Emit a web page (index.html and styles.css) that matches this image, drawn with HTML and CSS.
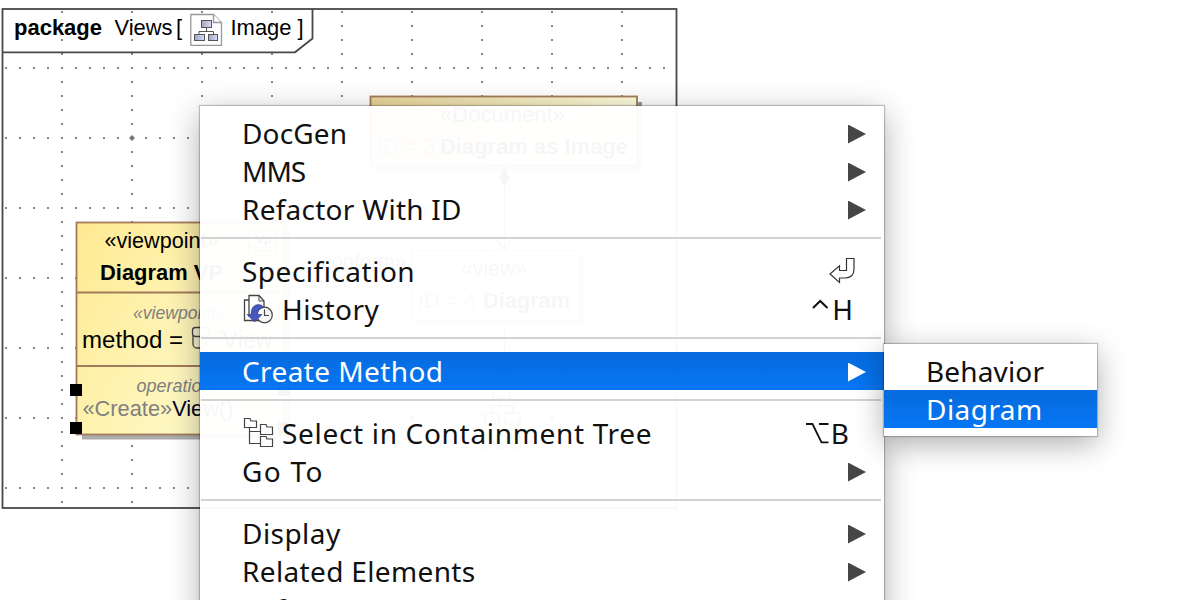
FILE: index.html
```html
<!DOCTYPE html>
<html lang="en">
<head>
<meta charset="utf-8">
<title>Views diagram</title>
<link rel="stylesheet" href="styles.css">
</head>
<body>
<main class="stage">
<svg class="diagram" width="1181" height="600" viewBox="0 0 1181 600">
  <defs>
    <linearGradient id="yellow" x1="0" y1="0" x2="1" y2="0.6"><stop offset="0" stop-color="#ffea91"/><stop offset="1" stop-color="#fdfbd0"/></linearGradient>
    <linearGradient id="tan" x1="0" x2="1"><stop offset="0" stop-color="#e8d59a"/><stop offset="1" stop-color="#fffddc"/></linearGradient>
    <linearGradient id="node" x1="0" x2="1"><stop offset="0" stop-color="#9da4c9"/><stop offset="1" stop-color="#dadef0"/></linearGradient>
    <pattern id="rows" x="5" y="67" width="14" height="70" patternUnits="userSpaceOnUse"><rect width="2" height="2" fill="#858585"/></pattern>
    <pattern id="cols" x="61" y="11" width="70" height="14" patternUnits="userSpaceOnUse"><rect width="2" height="2" fill="#858585"/></pattern>
  </defs>
  <rect class="frame" x="2.5" y="9" width="674" height="499"/>
  <rect x="4" y="60" width="670" height="446" fill="url(#rows)"/>
  <rect x="4" y="10" width="670" height="496" fill="url(#cols)"/>
  <g fill="#777"><path d="M132 135l3 3-3 3-3-3z"/><path d="M412 415l3 3-3 3-3-3z"/><path d="M552 415l3 3-3 3-3-3z"/></g>
  <path class="frame" d="M3 52.3H295L312.5 38.5V9"/>
  <g class="label">
    <text class="bold" x="14" y="34.5" textLength="88" lengthAdjust="spacingAndGlyphs">package</text>
    <text x="114.500" y="34.5" textLength="58" lengthAdjust="spacingAndGlyphs">Views</text>
    <text x="176" y="34.500">[</text>
    <text x="230.500" y="34.5" textLength="61" lengthAdjust="spacingAndGlyphs">Image</text>
    <text x="297.500" y="34.500">]</text>
  </g>
  <g>
    <path d="M190.800 14.500H213.500L221.500 22.500V45.300H190.800Z" fill="#fff" stroke="#999" stroke-width="1.300"/>
    <path d="M213.500 14.500V22.500H221.500" fill="#fff" stroke="#999" stroke-width="1.300"/>
    <path d="M206.500 27V31.500M199 34V31.500H213.500V34" fill="none" stroke="#555"/>
    <g fill="url(#node)" stroke="#555"><rect x="201.500" y="20.500" width="10" height="7"/><rect x="194.500" y="34.500" width="10" height="6"/><rect x="208.500" y="34.500" width="9" height="6"/></g>
  </g>

  <rect x="82" y="228" width="208" height="211.500" fill="#acacac"/>
  <rect class="edge" x="76.500" y="222.500" width="208" height="212" fill="url(#yellow)"/>
  <path class="edge" d="M77 292.500H284M77 366H284"/>
  <g class="label">
    <text x="104.500" y="248" textLength="114" lengthAdjust="spacingAndGlyphs">«viewpoint»</text>
    <text class="bold" x="100" y="280" textLength="123" lengthAdjust="spacingAndGlyphs">Diagram VP</text>
    <text class="note" x="133" y="318.500" textLength="93" lengthAdjust="spacingAndGlyphs">«viewpoint»</text>
    <text class="large" x="82" y="348" textLength="101" lengthAdjust="spacingAndGlyphs">method =</text>
    <text class="large" x="222" y="348" textLength="51" lengthAdjust="spacingAndGlyphs">View</text>
    <text class="note" x="136.500" y="392" textLength="84" lengthAdjust="spacingAndGlyphs">operations</text>
    <text x="82.500" y="416" textLength="151" lengthAdjust="spacingAndGlyphs"><tspan fill="#808080">«Create»</tspan><tspan fill="#000028">View()</tspan></text>
  </g>
  <rect x="193" y="332.500" width="13" height="15.500" rx="4" fill="#f4f0cf" stroke="#444" stroke-width="1.300"/>
  <rect x="192.500" y="327.500" width="16" height="9" rx="3" fill="#f4f0cf" stroke="#444" stroke-width="1.300"/>
  <rect x="210" y="332" width="11" height="13" fill="none" stroke="#777"/>
  <g fill="none" stroke="#444"><rect x="249" y="231" width="27" height="24"/><path d="M249 247H276M253 251H272"/></g>
  <text class="label bold small" x="255" y="244" textLength="17" lengthAdjust="spacingAndGlyphs">Vp</text>
  <path d="M70 384h12v12h-12zM70 422h12v12h-12zM278 384h12v12h-12zM278 422h12v12h-12z"/>

  <rect x="376" y="102" width="266" height="69" fill="#9b9b9b"/>
  <rect class="edge" x="370.500" y="96.500" width="266.500" height="69" fill="url(#tan)"/>
  <g class="label">
    <text x="440" y="122" textLength="125" lengthAdjust="spacingAndGlyphs">«Document»</text>
    <text x="377" y="154" textLength="58" lengthAdjust="spacingAndGlyphs" fill="#777">ID = 3</text>
    <text class="bold" x="440" y="154" textLength="188" lengthAdjust="spacingAndGlyphs">Diagram as Image</text>
  </g>
  <path d="M504.500 167l5 10-5 11-5-11z"/>
  <path d="M504.500 188V250M498 241l6.500 9 6.500-9M504.500 322V382M498 369l6.500 12 6.500-12" class="link"/>
  <rect x="418" y="256" width="166" height="70" fill="#bbb"/>
  <rect x="412" y="250.500" width="167" height="70" fill="#fbfbf6" stroke="#777"/>
  <g class="label">
    <text x="461" y="276" textLength="66" lengthAdjust="spacingAndGlyphs" fill="#333">«view»</text>
    <text x="418" y="308" textLength="58" lengthAdjust="spacingAndGlyphs" fill="#777">ID = 4</text>
    <text class="bold" x="483" y="308" textLength="87" lengthAdjust="spacingAndGlyphs">Diagram</text>
    <text x="310" y="269" textLength="96" lengthAdjust="spacingAndGlyphs" fill="#333">«conform»</text>
    <text x="525" y="369" textLength="93" lengthAdjust="spacingAndGlyphs">«expose»</text>
    <text class="bold" x="480" y="449" textLength="44" lengthAdjust="spacingAndGlyphs" fill="#777">DDD</text>
  </g>
  <path d="M286 287H412M299 279L286 287L299 295Z" class="link faint"/>
  <rect x="481" y="386" width="44" height="42" fill="#fff2de" stroke="#aaa"/>
  <g class="link"><rect x="493" y="387" width="17" height="12"/><rect x="485" y="413" width="14" height="11"/><rect x="505" y="413" width="15" height="11"/><path d="M501 399V406M491 413V406H513V413"/></g>
</svg>

<nav class="menu">
  <div class="item"><span class="name w-docgen">DocGen</span><i class="arrow"></i></div>
  <div class="item"><span class="name w-mms">MMS</span><i class="arrow"></i></div>
  <div class="item"><span class="name w-refactor">Refactor With ID</span><i class="arrow"></i></div>
  <hr class="rule">
  <div class="item"><span class="name w-spec">Specification</span>
    <svg class="enter" width="28" height="28" viewBox="0 0 28 28"><path d="M18.500 1.500H26V12Q26 21 17 21H11.500V25.500L2 17L11.500 8.800V13.500H18.500Z" fill="#fff" stroke="#333" stroke-width="1.200"/></svg></div>
  <div class="item">
    <svg class="icon" width="32" height="32" viewBox="0 0 32 32"><path d="M7 7H2.500V27.500H21" fill="#fff" stroke="#444" stroke-width="1.300"/><path d="M7 23V2.500H17L22 8V23Z" fill="#fff" stroke="#444" stroke-width="1.300"/><path d="M17 2.500V8H22" fill="none" stroke="#444"/><circle cx="22.500" cy="22" r="7.800" fill="#f8f8f8" stroke="#444" stroke-width="1.200"/><path d="M22.500 16.500V22.500H27" fill="none" stroke="#444" stroke-width="1.200"/><path d="M21.500 14.500Q20 11.500 16.500 11.500Q9 11.800 9 21.500H5L12.500 29L20 21.500H15.800Q15 15.500 21.500 14.500Z" fill="#4658bd" stroke="#26307b" stroke-width=".6"/></svg>
    <span class="name w-history">History</span><svg class="caret" width="19" height="12" viewBox="0 0 19 12"><path d="M2 10L9.200 3L16.500 10" fill="none" stroke="#111" stroke-width="2"/></svg><kbd class="key key-h">H</kbd></div>
  <hr class="rule">
  <div class="item active"><span class="name w-create">Create Method</span><i class="arrow"></i></div>
  <hr class="rule">
  <div class="item">
    <svg class="icon" width="32" height="32" viewBox="0 0 32 32"><g fill="#fff" stroke="#444" stroke-width="1.200"><path d="M2.500 1.500H8L9 4H14.500V10.500H2.500Z"/><path d="M18.500 7.500H24L25 10H30.500V17.500H18.500Z"/><path d="M18.500 19.500H24L25 22H30.500V29.500H18.500Z"/><path d="M7.500 10.500V26.500H18.500M7.500 14.500H18.500" fill="none"/></g></svg>
    <span class="name w-select">Select in Containment Tree</span><svg class="option" width="25" height="22" viewBox="0 0 25 22"><path d="M1 2H7.500L16.500 20.300H23.500M14 2H23.500" fill="none" stroke="#111" stroke-width="1.800"/></svg><kbd class="key key-b">B</kbd></div>
  <div class="item"><span class="name w-goto">Go To</span><i class="arrow"></i></div>
  <hr class="rule">
  <div class="item"><span class="name w-display">Display</span><i class="arrow"></i></div>
  <div class="item"><span class="name w-related">Related Elements</span><i class="arrow"></i></div>
  <div class="item"><span class="name w-refactor">Refactor</span><i class="arrow"></i></div>
</nav>
<nav class="menu submenu">
  <div class="item"><span class="name w-docgen">Behavior</span></div>
  <div class="item active"><span class="name w-display">Diagram</span></div>
</nav>
</main>
</body>
</html>
```
FILE: styles.css
```css
body { margin: 0; background: #fff; overflow: hidden; }
.stage { position: relative; width: 1181px; height: 600px; overflow: hidden; }
.diagram { display: block; }
.frame { fill: none; stroke: #484848; stroke-width: 1.8; }
.edge { stroke: #a27b5b; stroke-width: 1.8; }
.link { fill: none; stroke: #555; stroke-width: 1.5; }
.faint { stroke: #aaa; }
.label { font-family: "Liberation Sans", Arial, sans-serif; font-size: 22px; }
.label .bold, .label.bold { font-weight: 700; }
.label .large { font-size: 23.5px; }
.label .note { font-size: 18.5px; font-style: italic; fill: #808080; }
.label.small { font-size: 13px; }
.menu {
  position: absolute; left: 200px; top: 106px; width: 684px; box-sizing: border-box; padding: 8px 0;
  background: rgba(255, 255, 255, .965);
  box-shadow: 0 0 1px 1px rgba(0, 0, 0, .22), 0 8px 30px rgba(0, 0, 0, .32);
  font: 28px/38px "Noto Sans", "Open Sans", sans-serif; color: #111;
}
.submenu { left: 884px; top: 344px; width: 213px; background: #fff; }
.item { display: flex; align-items: center; height: 38px; padding: 0 18px 0 42px; }
.name { flex: 1; white-space: nowrap; }
.w-docgen { letter-spacing: .15px; }
.w-mms { letter-spacing: -1px; }
.w-refactor { letter-spacing: .25px; }
.w-spec { letter-spacing: .5px; }
.w-history, .w-create { letter-spacing: .4px; }
.w-select { letter-spacing: .68px; }
.w-goto { letter-spacing: 1.3px; }
.w-display { letter-spacing: .45px; }
.w-related { letter-spacing: .35px; }
.active { color: #fff; background: linear-gradient(rgba(0, 103, 220, .975), rgba(0, 115, 243, .975)); }
.arrow { width: 18px; height: 19px; margin-top: 2px; background: #464646; clip-path: polygon(0 0, 100% 50%, 0 100%); }
.active .arrow { background: #fff; }
.rule { height: 2px; margin: 9px 3px 13px 1px; border: 0; background: #d3d3d3; }
.icon { margin-right: 8px; }
.enter { margin-right: 10px; }
.key { font: inherit; }
.key-h { margin: 0 13px 0 2px; }
.key-b { margin: 0 17px 0 1px; }
.caret { margin-bottom: 10px; }
```
